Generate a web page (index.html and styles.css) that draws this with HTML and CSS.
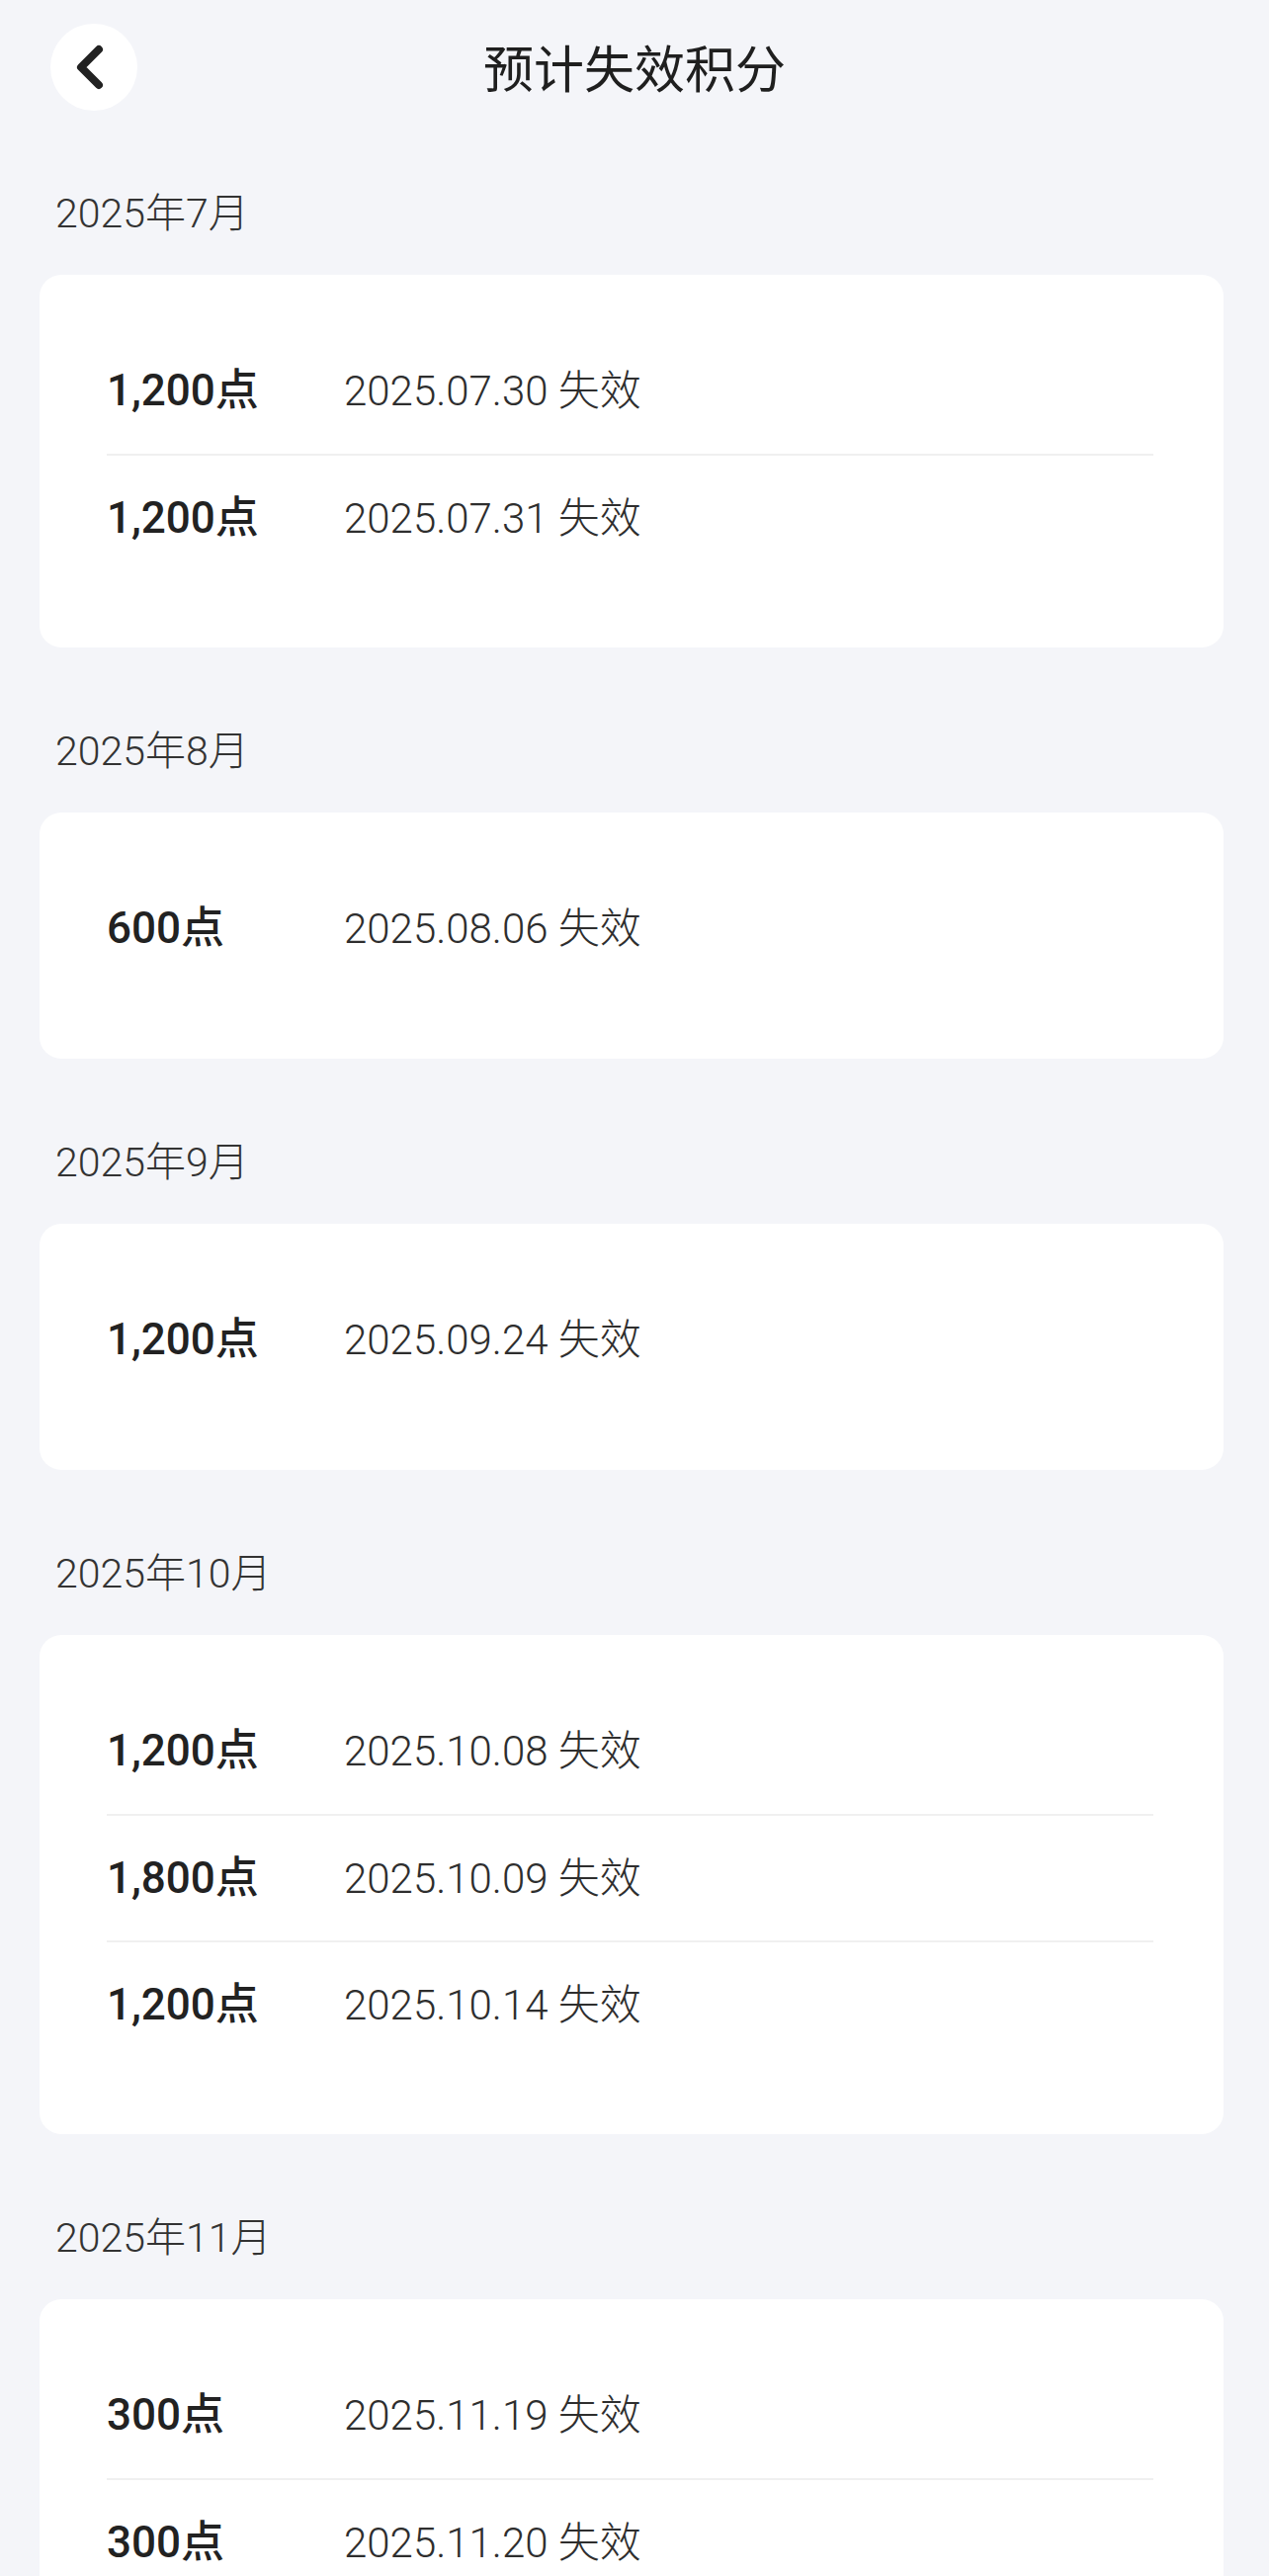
FILE: index.html
```html
<!DOCTYPE html>
<html lang="zh-CN">
<head>
<meta charset="utf-8">
<title>预计失效积分</title>
<link rel="stylesheet" href="styles.css">
</head>
<body>
<header class="topbar">
  <button class="back" aria-label="返回">
    <svg viewBox="0 0 88 88" width="88" height="88"><path d="M49 26 L31 44 L49 62" fill="none" stroke="#222" stroke-width="8" stroke-linecap="round" stroke-linejoin="round"/></svg>
  </button>
  <h1 class="title">预计失效积分</h1>
  <span class="spacer"></span>
</header>

<main class="list">
  <section class="month">
    <h2 class="month-label">2025年7月</h2>
    <div class="card">
      <div class="row"><span class="amount">1,200点</span><span class="date">2025.07.30 失效</span></div>
      <div class="row"><span class="amount">1,200点</span><span class="date">2025.07.31 失效</span></div>
    </div>
  </section>

  <section class="month">
    <h2 class="month-label">2025年8月</h2>
    <div class="card">
      <div class="row"><span class="amount">600点</span><span class="date">2025.08.06 失效</span></div>
    </div>
  </section>

  <section class="month">
    <h2 class="month-label">2025年9月</h2>
    <div class="card">
      <div class="row"><span class="amount">1,200点</span><span class="date">2025.09.24 失效</span></div>
    </div>
  </section>

  <section class="month">
    <h2 class="month-label">2025年10月</h2>
    <div class="card">
      <div class="row"><span class="amount">1,200点</span><span class="date">2025.10.08 失效</span></div>
      <div class="row"><span class="amount">1,800点</span><span class="date">2025.10.09 失效</span></div>
      <div class="row"><span class="amount">1,200点</span><span class="date">2025.10.14 失效</span></div>
    </div>
  </section>

  <section class="month">
    <h2 class="month-label">2025年11月</h2>
    <div class="card">
      <div class="row"><span class="amount">300点</span><span class="date">2025.11.19 失效</span></div>
      <div class="row"><span class="amount">300点</span><span class="date">2025.11.20 失效</span></div>
    </div>
  </section>
</main>
</body>
</html>
```

FILE: styles.css
```css
* { box-sizing: border-box; }

html, body {
  margin: 0;
  padding: 0;
  background: #f4f5f9;
}

body {
  width: 1284px;
  font-family: Roboto, "Noto Sans CJK SC", sans-serif;
  color: #222;
}

.topbar {
  display: grid;
  grid-template-columns: 88px 1fr 88px;
  align-items: center;
  padding: 23px 51px 0 51px;
  height: 111px;
}

.back {
  width: 88px;
  height: 88px;
  border: none;
  border-radius: 50%;
  background: #ffffff;
  padding: 0;
  display: flex;
  align-items: center;
  justify-content: center;
}

.back svg { display: block; }

.title {
  margin: 0;
  text-align: center;
  font-family: "Noto Sans CJK SC", sans-serif;
  font-weight: 400;
  font-size: 51px;
  line-height: 88px;
  padding-bottom: 2px;
  color: #1f1f1f;
}

.list {
  display: flex;
  flex-direction: column;
}

.month {
  margin-top: 85px;
}

.month-label {
  margin: 0 0 42px 0;
  padding-left: 56px;
  height: 40px;
  line-height: 40px;
  font-size: 41px;
  font-weight: 300;
  color: #333;
}

.card {
  margin: 0 46px 0 40px;
  background: #ffffff;
  border-radius: 22px;
  padding: 53px 71px 68px 68px;
}

.row {
  display: flex;
  align-items: center;
  height: 128px;
  padding-bottom: 8px;
}

.row + .row {
  border-top: 2px solid #f0f0f0;
}

.amount {
  width: 240px;
  font-size: 44px;
  font-weight: 500;
  color: #222;
}

.date {
  font-size: 42px;
  font-weight: 300;
  color: #2e2e2e;
}
```
